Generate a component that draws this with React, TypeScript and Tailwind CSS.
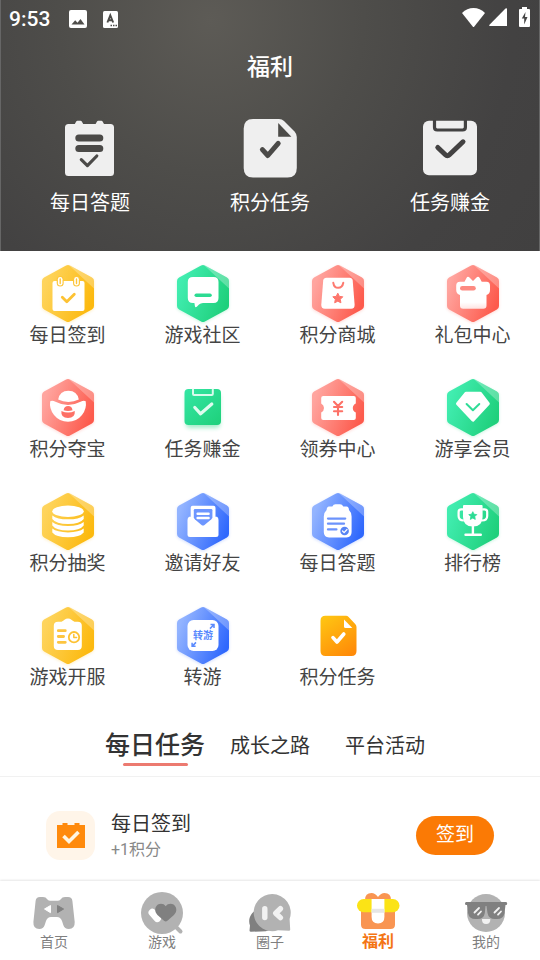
import React, { useState } from "react";
import clsx from "clsx";

type Tone = "yellow" | "green" | "red" | "blue";

const TONES: Record<Tone, [string, string]> = {
  yellow: ["#fed45c", "#fcb90e"],
  green: ["#41edb0", "#1fd07c"],
  red: ["#ffa59f", "#fd5a4c"],
  blue: ["#93b4ff", "#2f68fd"],
};

const STAR =
  "M0 -5 L1.6 -1.8 L5 -1.4 L2.5 1.1 L3.1 4.6 L0 3 L-3.1 4.6 L-2.5 1.1 L-5 -1.4 L-1.6 -1.8 Z";

function Hex({
  id,
  tone,
  children,
}: {
  id: string;
  tone: Tone;
  children: React.ReactNode;
}) {
  const [from, to] = TONES[tone];
  return (
    <svg
      viewBox="0 0 60 60"
      className="h-[60px] w-[60px] overflow-visible"
      aria-hidden="true"
    >
      <defs>
        <linearGradient
          id={id}
          gradientUnits="userSpaceOnUse"
          x1="6"
          y1="22"
          x2="54"
          y2="40"
        >
          <stop offset="0" stopColor={from} />
          <stop offset="1" stopColor={to} />
        </linearGradient>
        <filter id={`${id}-s`} x="-20%" y="-20%" width="140%" height="140%">
          <feGaussianBlur stdDeviation="1.5" />
        </filter>
      </defs>
      <path
        d="M30 7 52 19V44L30 56 8 44V19Z"
        fill={to}
        stroke={to}
        strokeWidth="8"
        strokeLinejoin="round"
        opacity="0.22"
        filter={`url(#${id}-s)`}
      />
      <path
        d="M30 6 52 18V43L30 55 8 43V18Z"
        fill={`url(#${id})`}
        stroke={`url(#${id})`}
        strokeWidth="8"
        strokeLinejoin="round"
      />
      <path
        d="M31 2.2 32 2.5 53.9 14.5Q56 15.8 56 18V25.5Z"
        fill="#fff"
        opacity="0.28"
      />
      {children}
    </svg>
  );
}

const round = {
  fill: "none",
  strokeLinecap: "round" as const,
  strokeLinejoin: "round" as const,
};

const ICONS: Record<string, React.ReactNode> = {
  sign: (
    <Hex id="sign" tone="yellow">
      <rect x="14.5" y="18" width="32" height="30" rx="2" fill="#fff" />
      <g {...round} stroke="#fec63a" strokeWidth="7">
        <path d="M22.2 16.5V20" />
        <path d="M38.5 16.5V20" />
      </g>
      <g {...round} stroke="#fff" strokeWidth="4.6">
        <path d="M22.2 16.2V20.2" />
        <path d="M38.5 16.2V20.2" />
      </g>
      <g {...round} stroke="#fec63a" strokeWidth="1.4">
        <path d="M22.2 16V20.5" />
        <path d="M38.5 16V20.5" />
      </g>
      <path
        {...round}
        d="M24.3 34.3 28.8 38.8 36.3 31.3"
        stroke="#fdc233"
        strokeWidth="2.8"
      />
    </Hex>
  ),
  community: (
    <Hex id="community" tone="green">
      <path
        d="M20 14H40.5Q45.5 14 45.5 19V35Q45.5 40 40.5 40H30Q27.5 40 26 41.5L23.8 43.8Q22.2 45 21.9 43L21.4 40H20Q14.8 40 14.8 35V19Q14.8 14 20 14Z"
        fill="#fff"
      />
      <path {...round} d="M23.3 32.3H37" stroke="#2cdb92" strokeWidth="3.6" />
    </Hex>
  ),
  mall: (
    <Hex id="mall" tone="red">
      <path
        d="M18.5 14.7H41.5Q44.3 14.7 44.7 17.5L46.6 41.5Q46.9 45.7 43 45.7H17Q13 45.7 13.3 41.5L15.2 17.5Q15.6 14.7 18.5 14.7Z"
        fill="#fff"
      />
      <path
        {...round}
        d="M25.3 19.8Q26 24.8 30.2 24.8T35.3 19.8"
        stroke="#fd7a70"
        strokeWidth="2"
      />
      <path
        d={STAR}
        transform="translate(29.8 35.2)"
        fill="#fd756b"
        stroke="#fd756b"
        strokeWidth="1"
        strokeLinejoin="round"
      />
    </Hex>
  ),
  gift: (
    <Hex id="gift" tone="red">
      <defs>
        <linearGradient id="gift-fade" x1="0" y1="0" x2="0" y2="1">
          <stop offset="0.8" stopColor="#fff" />
          <stop offset="1" stopColor="#fff" stopOpacity="0.8" />
        </linearGradient>
      </defs>
      <path
        d="M17 18.8H21.5L23.5 15Q24.7 12.7 26.5 14.5L30 18 33.5 14.5Q35.3 12.7 36.7 15L38.7 18.8H43.5Q47 19 47 22.8V27Q47 31 43.5 32V42.5Q43.5 45.7 40.3 45.7H20.2Q17 45.7 17 42.5V32Q13.2 31 13.2 27V22.8Q13.2 19 17 18.8Z"
        fill="url(#gift-fade)"
      />
      <path {...round} d="M19.3 25.3H30.5" stroke="#fd8a81" strokeWidth="4.6" />
    </Hex>
  ),
  treasure: (
    <Hex id="treasure" tone="red">
      <path
        d="M20.2 22.6Q21.6 13.8 30.4 13.8T40.8 22.6Q36 25 30.4 25T20.2 22.6Z"
        fill="#fff"
      />
      <path
        d="M12.2 24.2Q14.5 23.3 17.5 24.8 23.5 28 30 28T42.5 24.8Q45.5 23.3 47.7 24.2 49 31.5 44 38 38.5 44.8 30 44.8T16 38Q11 31.5 12.2 24.2Z"
        fill="#fff"
      />
      <path d="M25.6 33.2Q26.3 29 30.1 29T34.5 33.2Q30 34.7 25.6 33.2Z" fill="#fd7167" />
      <path
        d="M23.4 34Q30 37 36.8 34 37.4 41 30 41T23.4 34Z"
        fill="#fd7167"
      />
    </Hex>
  ),
  earn: (
    <svg viewBox="0 0 60 60" className="h-[60px] w-[60px]" aria-hidden="true">
      <defs>
        <linearGradient id="earn" x1="0" y1="0" x2="1" y2="1">
          <stop offset="0" stopColor="#35e6a4" />
          <stop offset="1" stopColor="#1ed07a" />
        </linearGradient>
        <filter id="earn-s" x="-20%" y="-20%" width="140%" height="140%">
          <feGaussianBlur stdDeviation="2" />
        </filter>
      </defs>
      <rect
        x="13"
        y="17"
        width="34"
        height="34"
        rx="4"
        fill="#1ed07a"
        opacity="0.4"
        filter="url(#earn-s)"
      />
      <rect x="11.5" y="12" width="36.5" height="36" rx="4" fill="url(#earn)" />
      <path
        d="M20 11.8V17Q20 18 21 18H38.8Q39.8 18 39.8 17V11.8"
        fill="none"
        stroke="#d9fbec"
        strokeWidth="2"
      />
      <path
        {...round}
        d="M21.8 30.5 27.6 36.8 38.8 27"
        stroke="#dffcef"
        strokeWidth="3.2"
      />
    </svg>
  ),
  coupon: (
    <Hex id="coupon" tone="red">
      <path
        d="M15.2 19H45.8Q47.8 19 47.8 21V26.5Q44.8 28 44.8 31T47.8 35.5V41Q47.8 43 45.8 43H15.2Q13.2 43 13.2 41V35.5Q16 34 16 31T13.2 26.5V21Q13.2 19 15.2 19Z"
        fill="#fff"
      />
      <path
        {...round}
        d="M26 24.8 30 29 34.2 24.8M30 29V38M26 30H34.2M26 34.2H34.2"
        stroke="#fd7167"
        strokeWidth="2.1"
      />
    </Hex>
  ),
  member: (
    <Hex id="member" tone="green">
      <path
        d="M23 16.2H37.3L45.3 26.7 30 43.2 14.5 26.7Z"
        fill="#fff"
        stroke="#fff"
        strokeWidth="3"
        strokeLinejoin="round"
      />
      <path
        {...round}
        d="M23.6 27 29.9 33.2 36.3 27"
        stroke="#2fdc97"
        strokeWidth="2"
      />
    </Hex>
  ),
  lottery: (
    <Hex id="lottery" tone="yellow">
      <ellipse cx="30" cy="20.3" rx="15.7" ry="5.7" fill="#fff" />
      <path d="M14.3 24.4Q19 28.3 30 28.3T45.7 24.4V28Q42 33 30 33T14.3 28Z" fill="#fff" />
      <path d="M14.3 31Q19 35 30 35T45.7 31V34.5Q42 39.5 30 39.5T14.3 34.5Z" fill="#fff" />
      <path d="M14.3 37.6Q19 41.4 30 41.4T45.7 37.6V41.6Q42 46.3 30 46.3T14.3 41.6Z" fill="#fff" />
    </Hex>
  ),
  invite: (
    <Hex id="invite" tone="blue">
      <rect x="17.7" y="14.7" width="24.8" height="20" rx="2" fill="#fff" />
      <path
        d="M17.7 25.7H16.2Q14.5 26.5 14.5 29V43.5Q14.5 46 17 46H43Q45.5 46 45.5 43.5V29Q45.5 26.5 44 25.7Z"
        fill="#fff"
      />
      <path
        d="M22 17.9H38.2Q39.4 17.9 39.4 19.2V26.2Q39.4 27.4 38.4 28.3L31.5 34Q30 35.2 28.5 34L21.8 28.3Q20.8 27.4 20.8 26.2V19.2Q20.8 17.9 22 17.9Z"
        fill="#6d96ff"
      />
      <path {...round} d="M24.6 22.7H35.6M24.6 27H35.6" stroke="#fff" strokeWidth="2.4" />
    </Hex>
  ),
  quiz: (
    <Hex id="quiz" tone="blue">
      <path
        d="M21 15.6H24.3Q25.4 13.2 27.5 13.2H32Q34.2 13.2 35.3 15.6H38.6Q40.8 15.8 41 19 43.6 21.5 43.6 25.5V41Q43.6 46.4 38.5 46.4H21Q15.8 46.4 15.8 41V25.5Q15.8 21.5 18.6 19 18.8 15.8 21 15.6Z"
        fill="#fff"
      />
      <path
        {...round}
        d="M20 27.6H37.2M20 32.7H36M20 38.4H28.4"
        stroke="#6c93fc"
        strokeWidth="2.3"
      />
      <circle cx="36.6" cy="40" r="4.3" fill="#5784f5" />
      <path {...round} d="M34.5 40 36.1 41.7 39 38.5" stroke="#fff" strokeWidth="1.2" />
    </Hex>
  ),
  rank: (
    <Hex id="rank" tone="green">
      <path
        d="M21 14H38.8Q39.6 14 39.6 15V26Q39.6 35.5 29.9 35.5T20 26V15Q20 14 21 14Z"
        fill="#fff"
      />
      <path
        d="M20.5 18.4H18Q15.6 18.4 15.6 21V25Q15.6 29.5 20.8 29.5M39.2 18.4H41.6Q44.2 18.4 44.2 21V25Q44.2 29.5 39 29.5"
        fill="none"
        stroke="#fff"
        strokeWidth="2.2"
      />
      <path {...round} d="M29.9 35V43.6M22.5 43.7H37.8" stroke="#fff" strokeWidth="2.4" />
      <path
        d={STAR}
        transform="translate(29.8 24.7) scale(.8)"
        fill="#2bdc94"
        stroke="#2bdc94"
        strokeLinejoin="round"
      />
    </Hex>
  ),
  launch: (
    <Hex id="launch" tone="yellow">
      <path
        d="M20 16.7H23.5Q25.4 16 26.5 14.8 28 13.6 30 13.6T33.4 14.8Q34.6 16 36.5 16.7H39.8Q43.8 16.7 43.8 20.7V41Q43.8 45 39.8 45H20Q15.8 45 15.8 41V20.7Q15.8 16.7 20 16.7Z"
        fill="#fff"
      />
      <path
        {...round}
        d="M20.3 25.7H27.3M20.3 31.5H25.6M20.3 37.3H27.3"
        stroke="#fdc540"
        strokeWidth="2.8"
      />
      <circle cx="36" cy="32.2" r="5.2" fill="#fff" stroke="#fdc233" strokeWidth="1.8" />
      <path {...round} d="M35.8 29.4V32.6H38.6" stroke="#fdc233" strokeWidth="1.5" />
    </Hex>
  ),
  transfer: (
    <Hex id="transfer" tone="blue">
      <rect x="14.5" y="15" width="31" height="31" rx="6" fill="#fff" />
      <text
        x="30"
        y="33.8"
        textAnchor="middle"
        className="text-[10px] font-bold"
        fill="#5a8afd"
      >
        转游
      </text>
      <path
        d="M37.5 19.6H41V23.1M40.8 19.8 37 23.6M22.6 41.3H19.1V37.8M19.3 41.1 23 37.4"
        fill="none"
        stroke="#5a8afd"
        strokeWidth="1.5"
      />
    </Hex>
  ),
  points: (
    <svg viewBox="0 0 60 60" className="h-[60px] w-[60px]" aria-hidden="true">
      <defs>
        <linearGradient id="points" x1="0.2" y1="0" x2="0.8" y2="1">
          <stop offset="0" stopColor="#ffc312" />
          <stop offset="1" stopColor="#ff8a08" />
        </linearGradient>
      </defs>
      <path
        d="M17.5 10.8H38Q39.5 10.8 40.6 12L47.2 19Q48.5 20.3 48.5 22V46Q48.5 51 43.5 51H17.5Q12.5 51 12.5 46V15.8Q12.5 10.8 17.5 10.8Z"
        fill="url(#points)"
      />
      <path d="M36 14.5V21.4Q36 23 37.6 23H44.3Z" fill="#fff" />
      <path
        {...round}
        d="M25 32.6 29 37 35.8 29"
        stroke="#fff"
        strokeWidth="3.6"
      />
    </svg>
  ),
};

const MENU = [
  { icon: "sign", label: "每日签到" },
  { icon: "community", label: "游戏社区" },
  { icon: "mall", label: "积分商城" },
  { icon: "gift", label: "礼包中心" },
  { icon: "treasure", label: "积分夺宝" },
  { icon: "earn", label: "任务赚金" },
  { icon: "coupon", label: "领券中心" },
  { icon: "member", label: "游享会员" },
  { icon: "lottery", label: "积分抽奖" },
  { icon: "invite", label: "邀请好友" },
  { icon: "quiz", label: "每日答题" },
  { icon: "rank", label: "排行榜" },
  { icon: "launch", label: "游戏开服" },
  { icon: "transfer", label: "转游" },
  { icon: "points", label: "积分任务" },
];

const SHORTCUTS = [
  {
    label: "每日答题",
    art: (
      <>
        <path
          d="M14.8 6 16.2 3.4Q16.6 2.7 17.4 2.7H20.6Q21.4 2.7 21.8 3.4L23.2 6H35.6L37 3.4Q37.4 2.7 38.2 2.7H41.4Q42.2 2.7 42.6 3.4L44 6H50.5Q54 6 54 9.5V54.5Q54 58 50.5 58H8.5Q5 58 5 54.5V9.5Q5 6 8.5 6Z"
          fill="#efefef"
        />
        <path {...round} d="M18.8 19.9H39.8M18.8 30.5H39.8" stroke="#4b4a48" strokeWidth="7" />
        <path {...round} d="M21.3 41.7 27.4 47.6 36.8 38" stroke="#4b4a48" strokeWidth="3.2" />
      </>
    ),
  },
  {
    label: "积分任务",
    art: (
      <>
        <path
          d="M13 1H39Q42 1 44 3L54.5 13.5Q56.8 16 56.8 19V50Q56.8 59.5 47.5 59.5H13Q3.7 59.5 3.7 50V10.5Q3.7 1 13 1Z"
          fill="#efefef"
        />
        <path d="M38.2 5V18.7H51.4Z" fill="#4c4b48" />
        <path {...round} d="M22.4 31.6 27.8 37.5 38.2 25.3" stroke="#4b4a48" strokeWidth="5" />
      </>
    ),
  },
  {
    label: "任务赚金",
    art: (
      <>
        <rect x="3" y="2.7" width="54" height="54.5" rx="6" fill="#efefef" />
        <path
          d="M14.5 2V9.3Q14.5 12 17.2 12H42.6Q45.4 12 45.4 9.3V2"
          fill="none"
          stroke="#434242"
          strokeWidth="3.2"
        />
        <path
          {...round}
          d="M17.8 29.5 25.4 36.8Q27.4 38.8 29.4 36.8L43 23.8"
          stroke="#434242"
          strokeWidth="5"
        />
      </>
    ),
  },
];

const TABS = ["每日任务", "成长之路", "平台活动"];

const NAV = [
  {
    label: "首页",
    art: (
      <>
        <path
          d="M10 9H13Q16 9 17 11 18 12.8 20 12.8H28Q30 12.8 31 11 32 9 35 9H38Q42 9 42.4 13L44.7 34Q45 41 38.8 41 34.5 41 33.3 37L32 33Q30.5 29 27 29H21Q17.5 29 16 33L14.7 37Q13.4 41 9.3 41 3 41 3.4 34L5.6 13Q6 9 10 9Z"
          fill="#b2b2b2"
        />
        <path d="M14.5 21 20.5 17.5V24.7Z" fill="#fff" stroke="#fff" strokeLinejoin="round" />
        <path d="M33.6 21 27.5 17.5V24.7Z" fill="#808080" stroke="#808080" strokeLinejoin="round" />
      </>
    ),
  },
  {
    label: "游戏",
    art: (
      <>
        <path {...round} d="M37 38 42.5 43.5" stroke="#b2b2b2" strokeWidth="4" />
        <circle cx="24" cy="25" r="21" fill="#b2b2b2" />
        <path {...round} d="M14.3 24.5 19.3 30.3" stroke="#fff" strokeWidth="7.5" />
        <path
          d="M27.7 18.2C25.5 14.8 19.5 14.8 17.7 19.3 16.4 23 18 25.5 20 27.5L26 32.8Q27.7 34 29.4 32.8L35.4 27.5C37.5 25.5 39.2 23 37.8 19.3 36 14.8 30 14.8 27.7 18.2Z"
          fill="#808080"
        />
      </>
    ),
  },
  {
    label: "圈子",
    art: (
      <>
        <path
          d="M12 20.5C5 24 1.5 31 4 37.5L3.5 42.5Q3.5 43.7 5 43.7L15 43.5Q20 43.5 24 42Z"
          fill="#808080"
        />
        <path
          d="M26.2 6A18.6 18.6 0 1 0 32 42.3L43 42.8Q44.3 42.8 44.2 41.5L43.6 31A18.6 18.6 0 0 0 26.2 6Z"
          fill="#b2b2b2"
        />
        <path {...round} d="M18.8 20.8V29.5" stroke="#f2f2f2" strokeWidth="5.4" />
        <path {...round} d="M34.4 20.7 29.7 25.2 34.4 29.6" stroke="#f2f2f2" strokeWidth="5.4" />
      </>
    ),
  },
  {
    label: "福利",
    art: (
      <>
        <path
          d="M11 12Q11 5 17.5 5 21 5 24 9 27 5 30.5 5 37 5 37 12Z"
          fill="#f99552"
        />
        <path d="M7 22H41V36.5Q41 41 36.5 41H11.5Q7 41 7 36.5Z" fill="#f99552" />
        <rect x="3" y="11" width="42.5" height="13.3" rx="6.6" fill="#fbe316" />
        <path d="M17.6 11H30.4V29Q30.4 35.4 24 35.4T17.6 29Z" fill="#fff" />
        <path d="M17.6 20.8H30.4V24.8H17.6Z" fill="#e6e6e6" />
      </>
    ),
  },
  {
    label: "我的",
    art: (
      <>
        <circle cx="24" cy="25" r="19" fill="#b2b2b2" />
        <path
          d="M4.2 14H44Q45.2 14 45.2 15.5T44 17H43.5L42.5 25Q41.5 31 35 31H33Q26.500 31 25.5 25L24.5 18H23.5L22.8 25Q22 31 15.5 31H13.5Q7 31 6 25L5 17H4.2Q3 17 3 15.5T4.2 14Z"
          fill="#808080"
        />
        <path
          {...round}
          d="M12.5 24.5 17 20M16 26.7 19 23.5M32.5 24.5 37 20M36 26.7 39 23.5"
          stroke="#f2f2f2"
          strokeWidth="1.8"
        />
        <path d="M20 31H28.3Q28.6 36 24.1 36T20 31Z" fill="#f2f2f2" />
      </>
    ),
  },
];

function StatusBar() {
  return (
    <div className="flex h-[38px] items-center justify-between pl-[9px] pr-[10px]">
      <div className="flex items-center">
        <span className="font-[Roboto] text-[21px] font-medium leading-6">
          9:53
        </span>
        <svg viewBox="0 0 18 18" className="ml-[19px] h-[18px] w-[18px]" aria-hidden="true">
          <path
            fillRule="evenodd"
            fill="#fff"
            d="M2 0H16Q18 0 18 2V16Q18 18 16 18H2Q0 18 0 16V2Q0 0 2 0ZM2.5 14.5H15.5L11.5 9 8.5 12.8 6.2 10.3Z"
          />
        </svg>
        <svg viewBox="0 0 15 17" className="ml-4 h-[17px] w-[15px]" aria-hidden="true">
          <rect width="15" height="17" rx="1.5" fill="#fff" />
          <path
            d="M4.4 11.500 7.3 4.3 10.2 11.5M5.500 9.3H9.1"
            fill="none"
            stroke="#4c4b48"
            strokeWidth="1.9"
          />
          <path d="M7.5 14.5H9M10 14.5H11.5M12.5 14.5H14" stroke="#4c4b48" strokeWidth="1.3" />
        </svg>
      </div>
      <div className="flex items-center pb-1">
        <svg viewBox="0 0 23 19" className="h-[19px] w-[23px]" aria-hidden="true">
          <path d="M0 5Q5 0 11.5 0T23 5L12.3 18.4Q11.5 19.4 10.7 18.4Z" fill="#fff" />
        </svg>
        <svg viewBox="0 0 18 18" className="ml-1 h-[18px] w-[18px]" aria-hidden="true">
          <path d="M18 1V18H1Q-.5 18 .5 16.7L16.5 .6Q18-.5 18 1Z" fill="#fff" />
        </svg>
        <svg viewBox="0 0 11 20" className="ml-3 h-5 w-[11px]" aria-hidden="true">
          <path d="M3 0H8V2H10Q11 2 11 3V19Q11 20 10 20H1Q0 20 0 19V3Q0 2 1 2H3Z" fill="#fff" />
          <path d="M6.5 5 2.8 11.5H5.2V17.5L8.5 10H6Z" fill="#444" />
        </svg>
      </div>
    </div>
  );
}

export default function App() {
  const [tab, setTab] = useState(0);
  const [page, setPage] = useState(3);

  return (
    <div className="flex min-h-screen flex-col bg-white font-['Roboto','Noto_Sans_CJK_SC',sans-serif] text-[#333]">
      <header className="bg-[radial-gradient(circle_at_39%_8%,#5d5b56_0%,#4e4d4a_38%,#434242_75%,#414040_100%)] pb-[33px] text-white shadow-[inset_1px_0_#666,inset_-1px_0_#666]">
        <StatusBar />
        <h1 className="flex h-[60px] items-center justify-center text-[23px] font-medium">
          福利
        </h1>
        <div className="mt-5 grid grid-cols-3">
          {SHORTCUTS.map((item) => (
            <button key={item.label} className="flex flex-col items-center gap-[10px]">
              <svg viewBox="0 0 60 60" className="h-[60px] w-[60px]" aria-hidden="true">
                {item.art}
              </svg>
              <span className="text-xl leading-[30px]">{item.label}</span>
            </button>
          ))}
        </div>
      </header>

      <main className="flex-1">
        <div className="grid grid-cols-4 gap-y-7 pt-3">
          {MENU.map((item) => (
            <button key={item.icon} className="flex flex-col items-center">
              {ICONS[item.icon]}
              <span className="text-[19px] leading-[26px] text-[#444]">
                {item.label}
              </span>
            </button>
          ))}
        </div>

        <div
          role="tablist"
          className="flex items-center justify-center border-b border-[#f1f1f1] pb-[9px] pt-[34px]"
        >
          {TABS.map((name, i) => (
            <button
              key={name}
              role="tab"
              aria-selected={tab === i}
              onClick={() => setTab(i)}
              className={clsx(
                "relative h-[42px] w-[115px] whitespace-nowrap",
                tab === i ? "text-[25px] font-medium" : "text-xl",
              )}
            >
              {name}
              {tab === i && (
                <span className="absolute inset-x-[25px] bottom-px h-[3px] rounded-full bg-[#ec7a70]" />
              )}
            </button>
          ))}
        </div>

        <section className="flex items-center px-[46px] pt-8">
          <span className="flex h-[49px] w-[49px] items-center justify-center rounded-[14px] bg-[#fff5e9]">
            <svg viewBox="0 0 28 26" className="h-[26px] w-7" aria-hidden="true">
              <path d="M0 3H5.5V1H10.5V3H17.5V1H22.5V3H28V26H0Z" fill="#ff8a0c" />
              <path d="M6.5 14 12 19.5 21.5 10" fill="none" stroke="#fff5e0" strokeWidth="3.6" />
            </svg>
          </span>
          <div className="ml-4 flex-1">
            <h2 className="text-xl leading-[30px]">每日签到</h2>
            <p className="text-base leading-[22px] text-[#888]">+1积分</p>
          </div>
          <button className="h-[39px] w-[78px] rounded-full bg-[#fb7a05] pt-px text-[19px] text-white">
            签到
          </button>
        </section>
      </main>

      <nav className="sticky bottom-0 grid grid-cols-5 bg-white pb-2 pt-[7px] shadow-[0_-1px_2px_rgba(0,0,0,0.1)]">
        {NAV.map((item, i) => (
          <button
            key={item.label}
            onClick={() => setPage(i)}
            className="flex flex-col items-center"
          >
            <svg
              viewBox="0 0 48 44"
              className="h-11 w-12 overflow-visible"
              aria-hidden="true"
            >
              {item.art}
            </svg>
            <span
              className={clsx(
                "leading-5",
                page === i
                  ? "text-base font-bold text-[#f47514]"
                  : "text-sm text-[#808080]",
              )}
            >
              {item.label}
            </span>
          </button>
        ))}
      </nav>
    </div>
  );
}
